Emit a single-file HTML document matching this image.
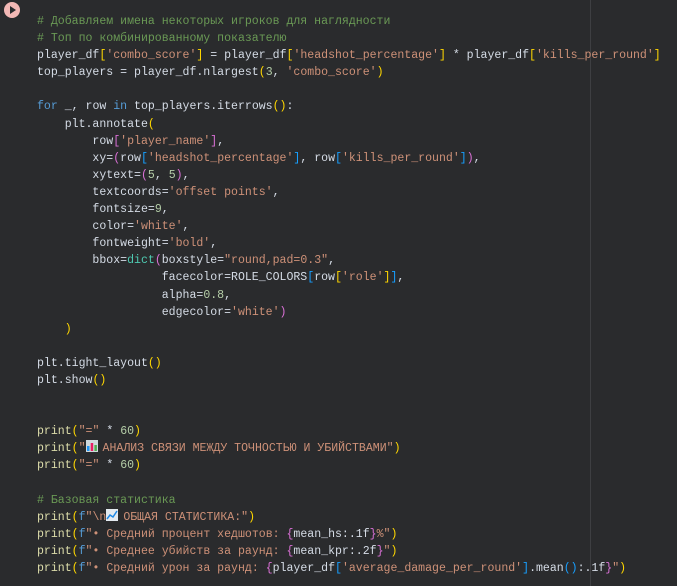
<!DOCTYPE html>
<html><head><meta charset="utf-8"><style>
html,body{margin:0;padding:0;background:#2a2b2d;width:677px;height:586px;overflow:hidden;position:relative}
pre{position:absolute;left:37px;top:13px;margin:0;font-family:"Liberation Mono","DejaVu Sans Mono",monospace;font-size:11.55px;line-height:17.1px;color:#d5dce6;white-space:pre}
.c{color:#6a9955}.s{color:#ce9178}.n{color:#b5cea8}.k{color:#569cd6}.f{color:#dcdcaa}.t{color:#4ec9b0}
.y{color:#ffd700}.p{color:#da70d6}.b{color:#179fff}.o{color:#d4d4d4}
.ruler{position:absolute;left:590px;top:0;width:1px;height:586px;background:#3e3f42}
.play{position:absolute;left:4px;top:2px;width:16px;height:16px;border-radius:50%;background:#f2b8b5}
.play:after{content:"";position:absolute;left:5.5px;top:4px;border-left:6px solid #2a2b2d;border-top:4px solid transparent;border-bottom:4px solid transparent}
.em{display:inline-block;width:12px;height:12px;vertical-align:-1px;margin-right:5px}
</style></head><body>
<div class="ruler"></div>
<div class="play"></div>
<pre><span class="c"># Добавляем имена некоторых игроков для наглядности</span>
<span class="c"># Топ по комбинированному показателю</span>
player_df<span class="y">[</span><span class="s">'combo_score'</span><span class="y">]</span> = player_df<span class="y">[</span><span class="s">'headshot_percentage'</span><span class="y">]</span> * player_df<span class="y">[</span><span class="s">'kills_per_round'</span><span class="y">]</span>
top_players = player_df.nlargest<span class="y">(</span><span class="n">3</span>, <span class="s">'combo_score'</span><span class="y">)</span>

<span class="k">for</span> _, row <span class="k">in</span> top_players.iterrows<span class="y">()</span>:
    plt.annotate<span class="y">(</span>
        row<span class="p">[</span><span class="s">'player_name'</span><span class="p">]</span>,
        xy=<span class="p">(</span>row<span class="b">[</span><span class="s">'headshot_percentage'</span><span class="b">]</span>, row<span class="b">[</span><span class="s">'kills_per_round'</span><span class="b">]</span><span class="p">)</span>,
        xytext=<span class="p">(</span><span class="n">5</span>, <span class="n">5</span><span class="p">)</span>,
        textcoords=<span class="s">'offset points'</span>,
        fontsize=<span class="n">9</span>,
        color=<span class="s">'white'</span>,
        fontweight=<span class="s">'bold'</span>,
        bbox=<span class="t">dict</span><span class="p">(</span>boxstyle=<span class="s">"round,pad=0.3"</span>,
                  facecolor=ROLE_COLORS<span class="b">[</span>row<span class="y">[</span><span class="s">'role'</span><span class="y">]</span><span class="b">]</span>,
                  alpha=<span class="n">0.8</span>,
                  edgecolor=<span class="s">'white'</span><span class="p">)</span>
    <span class="y">)</span>

plt.tight_layout<span class="y">()</span>
plt.show<span class="y">()</span>


<span class="f">print</span><span class="y">(</span><span class="s">"="</span> * <span class="n">60</span><span class="y">)</span>
<span class="f">print</span><span class="y">(</span><span class="s">"<svg class="em" viewBox="0 0 12 12"><rect width="12" height="12" fill="#cfd8dc"/><rect x="1" y="6" width="2.5" height="5" fill="#2196f3"/><rect x="4.7" y="3" width="2.5" height="8" fill="#e91e63"/><rect x="8.4" y="5" width="2.5" height="6" fill="#4caf50"/></svg>АНАЛИЗ СВЯЗИ МЕЖДУ ТОЧНОСТЬЮ И УБИЙСТВАМИ"</span><span class="y">)</span>
<span class="f">print</span><span class="y">(</span><span class="s">"="</span> * <span class="n">60</span><span class="y">)</span>

<span class="c"># Базовая статистика</span>
<span class="f">print</span><span class="y">(</span><span class="k">f</span><span class="s">"\n<svg class="em" viewBox="0 0 12 12"><rect width="12" height="12" fill="#e3eaf0"/><polyline points="1,10 4,6 7,8 11,2" fill="none" stroke="#1e88e5" stroke-width="1.5"/></svg>ОБЩАЯ СТАТИСТИКА:"</span><span class="y">)</span>
<span class="f">print</span><span class="y">(</span><span class="k">f</span><span class="s">"• Средний процент хедшотов: </span><span class="p">{</span>mean_hs:.1f<span class="p">}</span><span class="s">%"</span><span class="y">)</span>
<span class="f">print</span><span class="y">(</span><span class="k">f</span><span class="s">"• Среднее убийств за раунд: </span><span class="p">{</span>mean_kpr:.2f<span class="p">}</span><span class="s">"</span><span class="y">)</span>
<span class="f">print</span><span class="y">(</span><span class="k">f</span><span class="s">"• Средний урон за раунд: </span><span class="p">{</span>player_df<span class="b">[</span><span class="s">'average_damage_per_round'</span><span class="b">]</span>.mean<span class="b">()</span>:.1f<span class="p">}</span><span class="s">"</span><span class="y">)</span></pre>
</body></html>
